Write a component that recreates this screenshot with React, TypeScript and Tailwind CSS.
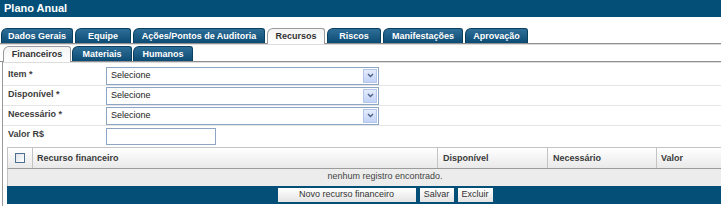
import React from "react";

const mainTabs: { label: string; w: string; active?: boolean }[] = [
  { label: "Dados Gerais", w: "w-[72px]" },
  { label: "Equipe", w: "w-[56px]" },
  { label: "Ações/Pontos de Auditoria", w: "w-[132px]" },
  { label: "Recursos", w: "w-[58px]", active: true },
  { label: "Riscos", w: "w-[54px]" },
  { label: "Manifestações", w: "w-[80px]" },
  { label: "Aprovação", w: "w-[63px]" },
];

const subTabs: { label: string; w: string; active?: boolean }[] = [
  { label: "Financeiros", w: "w-[68px]", active: true },
  { label: "Materiais", w: "w-[60px]" },
  { label: "Humanos", w: "w-[60px]" },
];

function Tab({ label, w, active }: { label: string; w: string; active?: boolean }) {
  return active ? (
    <div
      className={`${w} h-[16px] -mb-[1px] flex items-center justify-center pt-[1px] rounded-tl-[6px] rounded-tr-[3px] border border-b-0 border-[#9a9a9a] bg-gradient-to-b from-[#f4f4f4] to-white text-[9px] font-bold text-[#333]`}
    >
      {label}
    </div>
  ) : (
    <div
      className={`${w} h-[15px] flex items-center justify-center pt-[1px] rounded-tl-[6px] rounded-tr-[3px] border border-b-0 border-[#0b3f5e] bg-gradient-to-b from-[#2d6f98] to-[#0c4b73] text-[9px] font-bold text-white`}
    >
      {label}
    </div>
  );
}

function Select() {
  return (
    <div className="w-[273px] h-[18px] border border-[#8ea6c6] bg-white flex items-center">
      <span className="pl-[4px] text-[9px] text-[#222]">Selecione</span>
      <div className="ml-auto mr-[1px] w-[14px] h-[14px] border border-[#b4c6ea] bg-gradient-to-b from-[#e4ecfd] to-[#c3d3f6] flex items-center justify-center">
        <svg width="7" height="5" viewBox="0 0 7 5">
          <path d="M1 1 L3.5 3.5 L6 1" stroke="#4d6185" strokeWidth="1.4" fill="none" />
        </svg>
      </div>
    </div>
  );
}

function Row({ label, children, last }: { label: string; children: React.ReactNode; last?: boolean }) {
  return (
    <div className={`h-[20px] flex items-center ${last ? "" : "border-b border-[#e6e6e6]"}`}>
      <div className="w-[103px] pl-[5px] pb-[2px] text-[9px] font-bold text-[#3c3c3c]">{label}</div>
      {children}
    </div>
  );
}

export default function App() {
  return (
    <div className="w-[721px] h-[206px] overflow-hidden bg-white font-['Liberation_Sans',Arial,sans-serif]">
      <div className="h-[17px] bg-[#044f77] pl-[4px] flex items-center text-[11px] font-bold text-white">
        Plano Anual
      </div>

      <div className="mt-[12px] h-[15px] flex items-end gap-[2px] pl-[1px] border-b border-[#8f8f8f]">
        {mainTabs.map((t) => (
          <Tab key={t.label} {...t} />
        ))}
      </div>
      <div className="h-px bg-[#dcdcdc]" />

      <div className="mt-[2px] h-[15px] flex items-end gap-[1px] pl-[3px] border-b border-[#8f8f8f]">
        {subTabs.map((t) => (
          <Tab key={t.label} {...t} />
        ))}
      </div>

      <div className="ml-[2px] border-l border-[#9a9a9a] h-[200px]">
        <div className="h-px bg-[#dcdcdc]" />
        <div className="pt-[3px]">
          <Row label="Item *">
            <Select />
          </Row>
          <Row label="Disponível *">
            <Select />
          </Row>
          <Row label="Necessário *">
            <Select />
          </Row>
          <Row label="Valor R$" last>
            <div className="w-[110px] h-[17px] border border-[#8ea6c6] bg-white" />
          </Row>
        </div>

        <div className="ml-[4px] mt-[1px] w-[756px]">
          <div className="h-[22px] flex border border-[#c4c4c4] border-b-[#9c9c9c] bg-gradient-to-b from-white to-[#e9e9e9] text-[9px] font-bold text-[#3a3a3a]">
            <div className="w-[25px] border-r border-[#c4c4c4] flex items-center justify-center">
              <div className="w-[10px] h-[10px] border border-[#4f6f90] bg-gradient-to-br from-[#dfe3e8] to-white" />
            </div>
            <div className="w-[405px] border-r border-[#c4c4c4] pl-[4px] pt-[4px]">Recurso financeiro</div>
            <div className="w-[110px] border-r border-[#c4c4c4] pl-[5px] pt-[4px]">Disponível</div>
            <div className="w-[109px] border-r border-[#c4c4c4] pl-[5px] pt-[4px]">Necessário</div>
            <div className="flex-1 pl-[4px] pt-[4px]">Valor</div>
          </div>
          <div className="h-[17px] border-x border-[#c4c4c4] bg-[#ececec] flex items-center justify-center pb-[2px] text-[9px] text-[#444]">
            nenhum registro encontrado.
          </div>
          <div className="h-[18px] bg-[#044f77] flex items-center justify-center gap-[4px]">
            <div className="w-[138px] h-[14px] bg-gradient-to-b from-white to-[#e4e4e4] flex items-center justify-center text-[9px] text-[#333]">
              Novo recurso financeiro
            </div>
            <div className="w-[34px] h-[14px] bg-gradient-to-b from-white to-[#e4e4e4] flex items-center justify-center text-[9px] text-[#333]">
              Salvar
            </div>
            <div className="w-[35px] h-[14px] bg-gradient-to-b from-white to-[#e4e4e4] flex items-center justify-center text-[9px] text-[#333]">
              Excluir
            </div>
          </div>
        </div>
      </div>
    </div>
  );
}
